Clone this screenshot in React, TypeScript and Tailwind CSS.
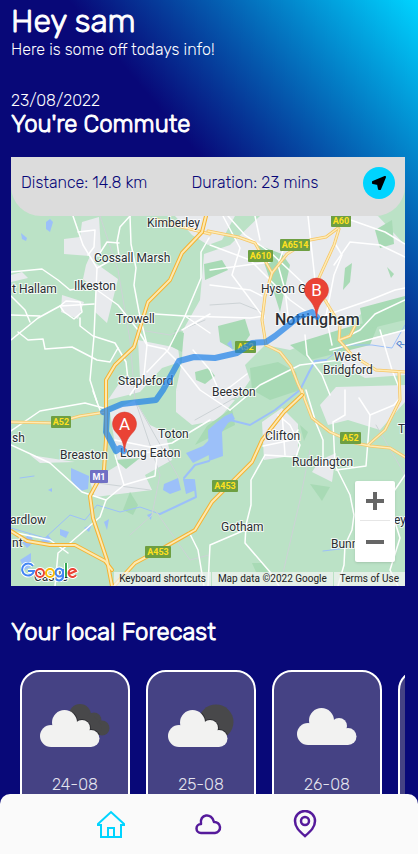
import React from 'react';

const area = '#bbe2c6';
const urban = '#e8eaed';
const park = '#a8dab5';
const water = '#9cc0f9';

const urbanAreas = [
  'M82 222 L99 217 L101 250 L94 262 L118 279 L107 323 L95 312 L96 290 L83 279 L86 265 L90 256 L64 254 L64 239 L80 237Z',
  'M62 295 L84 302 L78 319 L61 312Z',
  'M11 275 L22 272 L28 278 L11 282Z',
  'M175 216 L235 216 L222 240 L208 245 L192 235Z',
  'M204 254 L230 245 L260 216 L378 216 L405 245 L405 298 L370 306 L352 322 L345 345 L320 338 L290 350 L265 345 L245 365 L250 380 L238 398 L205 402 L176 390 L182 362 L183 330 L200 300Z',
  'M138 340 L178 348 L180 362 L162 368 L140 392 L108 400 L118 385 L140 378Z',
  'M176 390 L235 400 L218 420 L192 425 L176 412Z',
  'M110 412 L135 400 L150 425 L165 432 L172 460 L145 475 L152 490 L95 497 L90 482 L118 465Z',
  'M262 422 L282 408 L298 424 L298 455 L264 460Z',
  'M320 405 L336 387 L405 385 L405 402 L380 430 L348 420 L328 425Z',
  'M320 460 L336 453 L332 482 L312 472Z',
  'M340 345 L405 330 L405 375 L365 378 L342 365Z',
  'M30 455 L75 462 L40 463Z',
];
const parks = [
  'M204 264 L222 260 L228 270 L205 280Z', 'M218 326 L245 319 L250 335 L238 352 L220 342Z',
  'M258 245 L282 254 L290 265 L280 312 L270 280Z', 'M345 268 L352 263 L350 282 L343 290Z',
  'M375 230 L392 220 L394 244 L380 248Z', 'M290 345 L355 325 L380 320 L370 345 L310 360Z',
  'M360 308 L405 296 L405 320 L364 330Z', 'M130 492 L138 505 L133 515 L123 510Z',
  'M310 484 L330 487 L322 501Z', 'M300 425 L308 432 L304 441Z', 'M175 330 L184 333 L182 352 L170 346Z',
  'M195 372 L209 368 L215 376 L205 384 L196 380Z', 'M387 267 L394 274 L391 278Z', 'M115 460 L140 458 L126 469Z',
  'M195 445 L207 426 L232 408 L235 425Z', 'M250 368 L278 362 L296 372 L300 390 L270 400 L252 390Z',
  'M252 563 L262 563 L273 574 L256 572Z',
];
const lakes = [
  'M46 222 L50 219 L53 222 L50 232 L46 229Z', 'M21 233 L27 238 L26 241 L22 239Z',
  'M71 468 L89 476 L88 489 L80 491 L71 480Z', 'M164 484 L178 478 L181 490 L170 494 L163 490Z',
  'M183 479 L193 479 L196 490 L186 494Z', 'M186 453 L203 446 L209 440 L209 455 L193 463Z',
  'M208 430 L217 422 L225 416 L232 413 L235 419 L228 423 L222 432 L223 456 L209 461Z',
  'M84 528 L92 524 L89 532Z', 'M104 522 L109 519 L107 530Z', 'M48 490 L52 488 L52 492Z',
  'M60 529 L69 532 L66 538 L60 535Z', 'M40 542 L48 535 L52 540 L45 545Z', 'M21 541 L30 534 L34 542 L27 548Z',
  'M20 560 L31 553 L31 567 L25 570Z', 'M227 344 L231 340 L233 350Z', 'M147 515 L152 513 L151 520Z',
];
const minorRoads = [
  'M73 216 L83 245 L97 268 L96 290 L94 336 L90 380 L97 402', 'M78 232 L95 230 L94 247 L88 255',
  'M130 216 L120 227 L117 242 L119 256 L97 268', 'M130 216 L131 244 L136 268 L134 285 L139 312 L147 345',
  'M119 243 L107 242 L98 256', 'M11 272 L42 269 L58 280 L70 290 L83 288', 'M11 340 L38 318 L60 306 L94 304',
  'M60 306 L66 301 L80 302 L82 312 L74 319 L64 312Z', 'M11 296 L25 310 L30 322', 'M18 332 L28 340 L43 339 L45 349 L72 347 L97 360 L110 362 L118 348',
  'M80 318 L80 326 L93 336 L115 343 L126 362 L128 380', 'M97 290 L118 305 L138 330 L147 345 L165 349 L178 362',
  'M147 345 L144 375 L130 395', 'M147 372 L168 350 L185 316 L201 278 L201 252 L209 238', 'M11 315 L40 316', 'M155 314 L185 316 L210 333', 'M185 316 L250 318 L264 316',
  'M182 330 L210 314', 'M178 362 L200 390 L230 410', 'M193 350 L210 370 L222 398', 'M210 245 L250 260 L290 300 L315 318',
  'M228 216 L245 235 L270 252 L305 285', 'M308 216 L315 280 L315 318', 'M260 240 L255 216', 'M285 245 L278 265 L285 290 L288 315',
  'M334 242 L342 255 L334 275 L326 316 L332 345', 'M405 257 L380 245 L350 242 L334 265', 'M345 218 L385 232 L405 244', 'M318 318 L370 300 L395 290 L405 288',
  'M330 350 L360 342 L405 330', 'M210 285 L250 290 L262 296', 'M210 270 L270 262', 'M223 216 L240 248 L232 275 L264 318',
  'M305 335 L307 355 L322 375 L330 395', 'M380 330 L392 370 L400 390', 'M405 300 L375 314 L360 330 L340 340', 'M247 374 L230 387 L214 397',
  'M230 410 L260 385 L300 365 L340 360', 'M345 390 L345 415 L333 422 L335 465 L350 495 L354 515 L352 530 L345 545 L344 565 L338 586',
  'M306 390 L316 423 L323 440 L323 460', 'M359 398 L370 415 L366 466 L336 470', 'M370 415 L394 405 L400 398', 'M265 455 L296 457 L300 445 L290 425 L278 415',
  'M263 446 L292 440 L298 430', 'M282 412 L285 455', 'M265 455 L251 480 L251 505 L246 525 L245 543 L270 572 L279 586', 'M245 530 L210 545 L208 586', 'M405 475 L388 500 L400 538 L390 570 L398 586',
  'M11 431 L40 411 L85 403 L107 409', 'M11 445 L50 463 L82 492 L106 500 L124 485 L155 476 L157 455', 'M106 500 L100 517 L70 543 L58 553 L55 586',
  'M12 532 L50 540 L68 553', 'M115 455 L124 485', 'M115 440 L150 447 L172 443 L210 420', 'M130 455 L165 450', 'M189 532 L198 550 L204 586', 'M93 391 L97 402 L100 410',
];
const mainRoads = [
  'M208 231 L238 237 L255 243 L272 273 L265 296 L262 320 L266 345',
  'M266 345 L280 352 L291 366 L298 384 L303 395',
  'M272 273 L287 254 L310 240 L326 237 L338 228', 'M339 229 L334 245 L318 280',
  'M325 300 L340 325 L339 340 L352 355 L376 370 L405 372', 'M339 340 L350 336 L355 326', 'M399 372 L400 400 L385 430 L368 445',
  'M302 390 L305 400 L312 418 L330 432 L355 443 L370 446 L390 448 L405 457', 'M11 422 L55 423 L80 416 L106 412', 'M155 219 L178 226 L210 234',
];
const trunkRoads = [
  'M206 216 L202 232 L182 253 L170 280 L148 302 L134 347 L115 365 L106 380 L106 412 L106 440 L104 470 L90 496 L93 518 L107 560 L112 586',
  'M114 586 L135 563 L165 547 L195 530 L212 502 L252 462 L262 440 L284 412 L302 395',
  'M11 531 L27 541 L50 545 L75 545 L105 561 L112 570',
];
const labels: [string, number, number][] = [
  ['Kimberley', 147, 227], ['Cossall Marsh', 94, 262], ['Ilkeston', 74, 290], ['t Hallam', 12, 293],
  ['Trowell', 116, 323], ['Stapleford', 118, 385], ['Hyson G', 261, 293],
  ['West', 334, 361], ['Bridgford', 323, 374], ['Beeston', 212, 396], ['Clifton', 265, 440], ['Toton', 158, 438],
  ['Breaston', 60, 459], ['Long Eaton', 120, 457], ['sh', 12, 442], ['Ruddington', 292, 466], ['Gotham', 221, 531],
  ['Bunny', 331, 548], ['ey', 394, 524], ['ardlow', 10, 524], ['nt', 12, 547], ['Castle', 34, 581], ['T', 398, 433],
];
const shields: [string, number, number, number][] = [
  ['A60', 331, 215, 20], ['A6514', 280, 239, 30], ['A610', 248, 250, 25], ['A52', 235, 341, 21], ['A52', 51, 416, 20],
  ['A52', 340, 432, 21], ['A453', 212, 480, 26], ['A453', 145, 546, 26],
];

function Roads({ paths, color, width }: { paths: string[]; color: string; width: number }) {
  return (
    <g fill="none" stroke={color} strokeWidth={width} strokeLinejoin="round" strokeLinecap="round">
      {paths.map((d) => <path key={d} d={d} />)}
    </g>
  );
}

function Pin({ x, y, letter }: { x: number; y: number; letter: string }) {
  return (
    <g transform={`translate(${x} ${y})`}>
      <path d="M0 0 C-1 -10 -3 -13 -7 -18 C-10 -21 -12 -24 -12 -28 A12 12 0 0 1 12 -28 C12 -24 10 -21 7 -18 C3 -13 1 -10 0 0Z" fill="#ea4335" stroke="#d33c30" strokeWidth="0.5" />
      <text x="0" y="-22" textAnchor="middle" fontSize="17" fill="white">{letter}</text>
    </g>
  );
}

function MapDrawing() {
  return (
    <svg viewBox="11 157 394 429" preserveAspectRatio="xMidYMid slice" className="absolute inset-0 size-full font-['Roboto',sans-serif] font-normal" role="img" aria-label="Route map">
      <rect x="-400" y="157" width="1200" height="429" fill={area} />
      {urbanAreas.map((d) => <path key={d} d={d} fill={urban} />)}
      {parks.map((d) => <path key={d} d={d} fill={park} />)}
      {lakes.map((d) => <path key={d} d={d} fill={water} />)}
      <Roads color={water} width={2} paths={['M209 461 L195 465 L184 478', 'M194 480 L196 497 L175 507 L160 514', 'M230 420 L250 425 L275 410 L300 390 L309 372', 'M309 372 L315 361 L326 360']} />
      <Roads color={water} width={1} paths={['M11 528 L45 538 L70 515 L85 520 L97 505 L120 512 L140 507 L160 514', 'M326 360 L345 345 L372 345 L392 348 L405 325', 'M20 478 L34 476', 'M323 551 L340 549']} />
      <Roads color="#cdd3d6" width={1} paths={['M100 216 L118 270 L130 340 L135 400 L160 475 L152 515 L130 535', 'M310 450 L300 500 L280 586', 'M210 305 L240 303 L262 312', 'M140 330 L170 335 L205 320', 'M90 482 L150 490', 'M195 420 L240 395', 'M135 400 L180 480', 'M155 510 L190 560 L209 555', 'M376 425 L405 475']} />
      <Roads color="#ffffff" width={1.5} paths={minorRoads} />
      <Roads color="#f6c665" width={3} paths={mainRoads} />
      <Roads color="#feebb5" width={1.5} paths={mainRoads} />
      <Roads color="#f5b332" width={4} paths={trunkRoads} />
      <Roads color="#fde9b0" width={2} paths={trunkRoads} />
      <g fill="#2b2f33" stroke="white" strokeWidth="2" strokeOpacity="0.8" paintOrder="stroke" fontSize="12">
        {labels.map(([name, x, y]) => <text key={name} x={x} y={y}>{name}</text>)}
        <text x="275" y="325" fontSize="16" fontWeight="500">Nottingham</text>
      </g>
      <text x="0" y="0" fontSize="10" fill="#4a7fd0" transform="translate(401 349) rotate(-50)">R</text>
      {shields.map(([name, x, y, w]) => (
        <g key={`${name}${x}`}>
          <rect x={x} y={y} width={w} height="12" rx="1" fill="#6e9f42" />
          <text x={x + w / 2} y={y + 9} textAnchor="middle" fontSize="9" fontWeight="700" fill="#ffe11f">{name}</text>
        </g>
      ))}
      <rect x="90" y="470" width="18" height="13" rx="1" fill="#7070c4" />
      <text x="99" y="480" textAnchor="middle" fontSize="9" fontWeight="700" fill="white">M1</text>
      <g opacity="0.7">
        <Roads color="#1c80e8" width={6} paths={['M124 451 L120 448 L116 451 L106 432 L107 413 L103 412 L122 404 L156 400 L163 390 L179 361 L194 357 L215 358 L237 353 L252 343 L266 342 L275 336 L300 316 L312 312 L317 317']} />
      </g>
      <Pin x={124.5} y={452} letter="A" />
      <Pin x={316.5} y={318} letter="B" />
    </svg>
  );
}

function GoogleMark() {
  return (
    <a href="#google" aria-label="Google" className="absolute bottom-1 left-[10px]">
      <svg viewBox="0 0 58 20" className="h-5 w-[58px]" aria-hidden="true" fill="none">
        {['white', ''].map((halo) => (
          <g key={halo} strokeWidth={halo ? 4 : 2}>
            <path d="M12 4 A6 6 0 1 0 13 9 H7" stroke={halo || '#4285f4'} />
            <circle cx="19" cy="11" r="4" stroke={halo || '#ea4335'} />
            <circle cx="29" cy="11" r="4" stroke={halo || '#fbbc04'} />
            <path d="M42 7 V15 A4 4 0 0 1 35 17 M42 11 A3.700 4 0 1 1 42 10" stroke={halo || '#4285f4'} />
            <path d="M45 1 V15" stroke={halo || '#34a853'} />
            <path d="M48 12 L55 9 A4 4 0 1 0 55 13" stroke={halo || '#ea4335'} />
          </g>
        ))}
      </svg>
    </a>
  );
}

function WhiteCloud() {
  return (
    <>
      <circle cx="11" cy="32" r="11" />
      <circle cx="24.5" cy="18.500" r="12.5" />
      <circle cx="42" cy="24" r="8" />
      <circle cx="51" cy="34.500" r="8.5" />
      <path d="M11 22 H42 L51 30 V43 H11Z" />
    </>
  );
}

function WeatherIcon({ kind }: { kind: 'clouds' | 'sun' | 'cloud' }) {
  if (kind === 'cloud') {
    return <svg viewBox="0 6 60 37" className="h-[37px] w-[60px]" fill="#f2f2f1" aria-hidden="true"><WhiteCloud /></svg>;
  }
  const clouds = kind === 'clouds';
  return (
    <svg viewBox={clouds ? '0 0 70 44' : '0 0 66 44'} className={clouds ? 'h-11 w-[70px]' : 'h-11 w-[66px]'} aria-hidden="true">
      {clouds ? (
        <g fill="#48484a">
          <circle cx="40" cy="11" r="11" />
          <circle cx="54" cy="16" r="7.5" />
          <circle cx="62" cy="24" r="7.500" />
          <path d="M40 12 L54 12 L62 22 L60 31 L45 31Z" />
        </g>
      ) : (
        <circle cx="48" cy="18" r="17.5" fill="#48484a" />
      )}
      <g clipPath={`url(#${kind})`} fill="#2e2e32" stroke="#2e2e32" strokeWidth="2"><WhiteCloud /></g>
      <clipPath id={kind}>{clouds ? <path d="M30 3 H70 V31 H45Z" /> : <circle cx="48" cy="18" r="17.500" />}</clipPath>
      <g fill="#f2f2f1"><WhiteCloud /></g>
    </svg>
  );
}

const days: { date: string; kind: 'clouds' | 'sun' | 'cloud' }[] = [
  { date: '24-08', kind: 'clouds' },
  { date: '25-08', kind: 'sun' },
  { date: '26-08', kind: 'cloud' },
];
const card = 'flex h-[180px] w-[110px] shrink-0 flex-col items-center rounded-[20px] border-2 border-white bg-[#454284] pt-8';

export default function App() {
  return (
    <div className="h-screen overflow-hidden bg-[#080878] bg-[linear-gradient(230deg,#00d4ff_0px,#080878_268px)] font-['Rubik','Roboto',sans-serif] font-light text-white">
      <main className="pt-[3px] pr-[13px] pl-[11px]">
        <h1 className="text-[32px] leading-9 [-webkit-text-stroke:1px_white]">Hey sam</h1>
        <p className="mt-px text-base leading-5">Here is some off todays info!</p>
        <p className="mt-[33px] text-base leading-4">23/08/2022</p>
        <h2 className="text-2xl leading-[30px] [-webkit-text-stroke:1px_white]">You're Commute</h2>
        <section className="relative mt-[18px] h-[429px] overflow-hidden">
          <MapDrawing />
          <div className="relative flex h-[59px] items-start rounded-b-[30px] bg-[#dcdcdc] px-[10px] pt-[10px] text-base leading-8 text-[#080878]">
            <span>Distance: 14.8 km</span>
            <span className="ml-11">Duration: 23 mins</span>
            <button aria-label="Navigate" className="ml-auto flex size-8 items-center justify-center rounded-full bg-[#00d4ff]">
              <svg viewBox="0 0 16 16" className="size-4"><path d="M14 2 L2 7 L2 8 L7 9 L8 14 L9 14Z" fill="black" stroke="black" strokeWidth="2" strokeLinejoin="round" /></svg>
            </button>
          </div>
          <GoogleMark />
          <div className="absolute right-[10px] bottom-6 flex w-10 flex-col rounded-xs bg-white px-[5px] shadow">
            <button aria-label="Zoom in" className="flex h-10 items-center justify-center border-b border-[#e6e6e6]">
              <svg viewBox="0 0 18 18" className="size-[18px]"><path d="M0 9 H18 M9 0 V18" stroke="#666" strokeWidth="4" /></svg>
            </button>
            <button aria-label="Zoom out" className="flex h-[41px] items-center justify-center">
              <svg viewBox="0 0 18 18" className="size-[18px]"><path d="M0 9 H18" stroke="#666" strokeWidth="4" /></svg>
            </button>
          </div>
          <div className="absolute right-0 bottom-0 flex h-[14px] gap-px font-['Roboto',sans-serif] text-[10px] leading-[14px] font-normal whitespace-nowrap text-[#222]">
            <button className="bg-[#f5f5f5]/70 px-[5px]">Keyboard shortcuts</button>
            <span className="bg-[#f5f5f5]/70 px-[6px]">Map data ©2022 Google</span>
            <a href="#terms" className="bg-[#f5f5f5]/70 px-[6px]">Terms of Use</a>
          </div>
        </section>
        <h2 className="mt-[30px] text-2xl leading-8 [-webkit-text-stroke:1px_white]">Your local Forecast</h2>
        <div className="mt-[22px] flex gap-4 overflow-hidden pl-[9px]">
          {days.map((d) => (
            <article key={d.date} className={card}>
              <div className="flex h-11 items-center"><WeatherIcon kind={d.kind} /></div>
              <p className="mt-[27px] text-base leading-5 text-[#e4e4ee]">{d.date}</p>
            </article>
          ))}
          <article className={card} />
        </div>
      </main>
      <nav className="fixed inset-x-0 bottom-0 flex h-[60px] items-center justify-center gap-[69px] rounded-t-[10px] bg-[#fafafa] pr-[2px] text-[#551a9b]">
        <a href="#home" aria-label="Home" className="text-[#00d4ff]">
          <svg viewBox="0 0 28 28" className="size-7" fill="none" stroke="currentColor" strokeWidth="2">
            <path d="M4 15 H1 V14 L14 2 L27 14 V15 H24 V27 H4Z" />
            <path d="M11 27 V18 H17 V27" />
          </svg>
        </a>
        <a href="#weather" aria-label="Weather">
          <svg viewBox="0 0 28 28" className="size-7" fill="none" stroke="currentColor" strokeWidth="2.500" strokeLinejoin="round">
            <path d="M7 23 A4.500 4.500 0 0 1 7 14 C5 4 18 2 20 12 A5.500 5.500 0 0 1 21 23Z" />
          </svg>
        </a>
        <a href="#location" aria-label="Location">
          <svg viewBox="0 0 28 28" className="size-7" fill="none" stroke="currentColor" strokeWidth="2.500">
            <path d="M14 26 C8 21 4 17 4 11 A10 10 0 0 1 24 11 C24 17 20 21 14 26Z" />
            <circle cx="14" cy="11" r="4" />
          </svg>
        </a>
      </nav>
    </div>
  );
}
